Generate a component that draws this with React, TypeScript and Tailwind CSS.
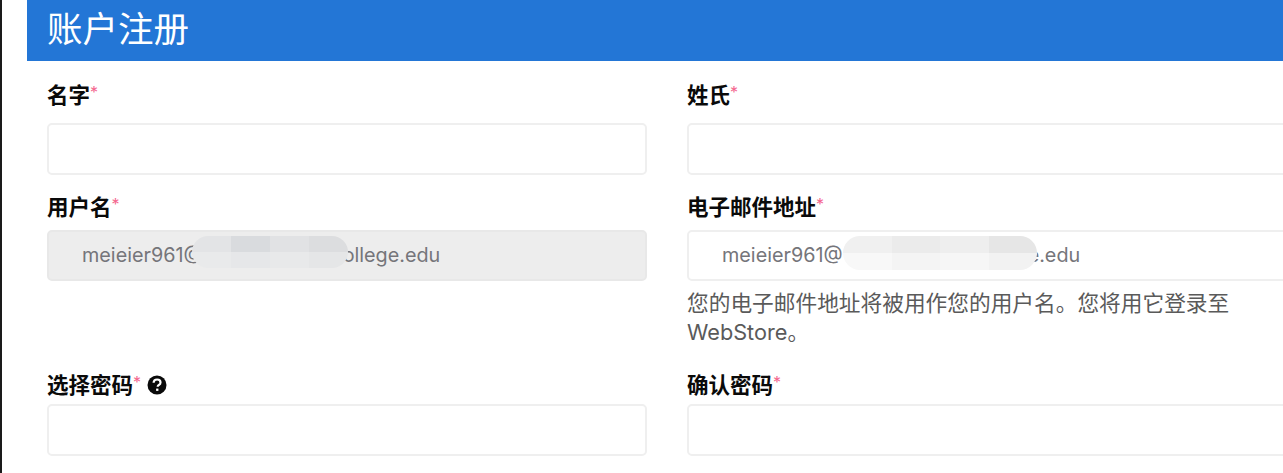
const CJK = "font-['Inter','Noto_Sans_CJK_SC',sans-serif]";

function Star() {
  return <span className="relative top-[-3px] text-[16px] leading-none font-normal text-[#f4668e]">*</span>;
}

function HelpIcon() {
  return (
    <svg viewBox="0 0 20 20" className="ml-[6px] size-[20px]">
      <circle cx="10" cy="10" r="9.5" fill="#0a0a0a" />
      <path d="M6.6 7.7c.1-2 1.5-3.2 3.5-3.2s3.4 1.1 3.4 2.9c0 1.3-.7 2-1.7 2.6-.8.5-1.1.9-1.1 1.7" fill="none" stroke="#fff" strokeWidth="2.2" />
      <rect x="9.1" y="13.6" width="2.3" height="2.3" fill="#fff" />
    </svg>
  );
}

function Label({ text, help, className }: { text: string; help?: boolean; className: string }) {
  return (
    <div className={`flex h-[26px] items-center text-[21.5px] leading-[26px] font-bold text-[#0a0a0a] ${className}`}>
      <span>{text}</span>
      <Star />
      {help && <HelpIcon />}
    </div>
  );
}

function Blur({ className, light }: { className: string; light?: boolean }) {
  const top = light
    ? ["bg-[#f0f0f0]", "bg-[#ebebeb]", "bg-[#eeeeee]", "bg-[#e6e6e6]"]
    : ["bg-[#e3e4e6]", "bg-[#d9dbde]", "bg-[#e1e2e4]", "bg-[#dcdddf]"];
  const bottom = light
    ? ["bg-[#f8f8f8]", "bg-[#f4f4f4]", "bg-[#f6f6f6]", "bg-[#f2f2f2]"]
    : ["bg-[#e9eaeb]", "bg-[#e6e7e9]", "bg-[#e8e9ea]", "bg-[#e5e6e7]"];
  return (
    <div className={`absolute overflow-hidden rounded-[18px] ${className}`}>
      <div className="flex h-1/2">
        {top.map((c, i) => (
          <div key={i} className={`flex-1 ${c}`} />
        ))}
      </div>
      <div className="flex h-1/2">
        {bottom.map((c, i) => (
          <div key={i} className={`flex-1 ${c}`} />
        ))}
      </div>
    </div>
  );
}

function Input({
  h = "h-[52px]",
  disabled,
  children,
  blur,
}: {
  h?: string;
  disabled?: boolean;
  children?: React.ReactNode;
  blur?: React.ReactNode;
}) {
  return (
    <div
      className={`relative flex w-[600px] items-center rounded-[5px] border-2 pl-[33px] text-[19.8px] whitespace-pre text-[#75757a] ${h} ${
        disabled ? "border-[#e8e8e8] bg-[#ededed]" : "border-[#efefef] bg-white"
      }`}
    >
      {children}
      {blur}
    </div>
  );
}

export default function App() {
  return (
    <div className={`flex h-[473px] w-[1283px] overflow-hidden bg-white ${CJK}`}>
      <div className="w-[2px] shrink-0 bg-[#1a1a1a]" />
      <div className="ml-[25px] flex min-w-0 flex-1 flex-col">
        <div className="flex h-[61px] shrink-0 items-center bg-[#2376d6] pb-[1px] pl-[20px] text-[35.5px] text-white">账户注册</div>
        <div className="grid grid-cols-[600px_600px] gap-x-[40px] pl-[20px]">
          <div>
            <Label text="名字" className="mt-[21px] mb-[15px]" />
            <Input />
          </div>
          <div>
            <Label text="姓氏" className="mt-[21px] mb-[15px]" />
            <Input />
          </div>
          <div>
            <Label text="用户名" className="mt-[19px] mb-[10px]" />
            <Input h="h-[51px]" disabled blur={<Blur className="top-[4px] left-[143px] h-[32px] w-[156px]" />}>
              meieier961@
              <span className="inline-block w-[140px]" />
              ollege.edu
            </Input>
          </div>
          <div>
            <Label text="电子邮件地址" className="mt-[19px] mb-[10px]" />
            <Input h="h-[51px]" blur={<Blur light className="top-[4px] left-[154px] h-[34px] w-[194px]" />}>
              meieier961@
              <span className="inline-block w-[185px]" />
              e.edu
            </Input>
            <div className="mt-[8px] w-[560px] text-[21.7px] leading-[29px] text-[#5a5a5a]">
              您的电子邮件地址将被用作您的用户名。您将用它登录至 WebStore。
            </div>
          </div>
          <div className="col-start-1">
            <Label text="选择密码" help className="mt-[25px] mb-[6px]" />
            <Input />
          </div>
          <div>
            <Label text="确认密码" className="mt-[25px] mb-[6px]" />
            <Input />
          </div>
        </div>
      </div>
    </div>
  );
}
